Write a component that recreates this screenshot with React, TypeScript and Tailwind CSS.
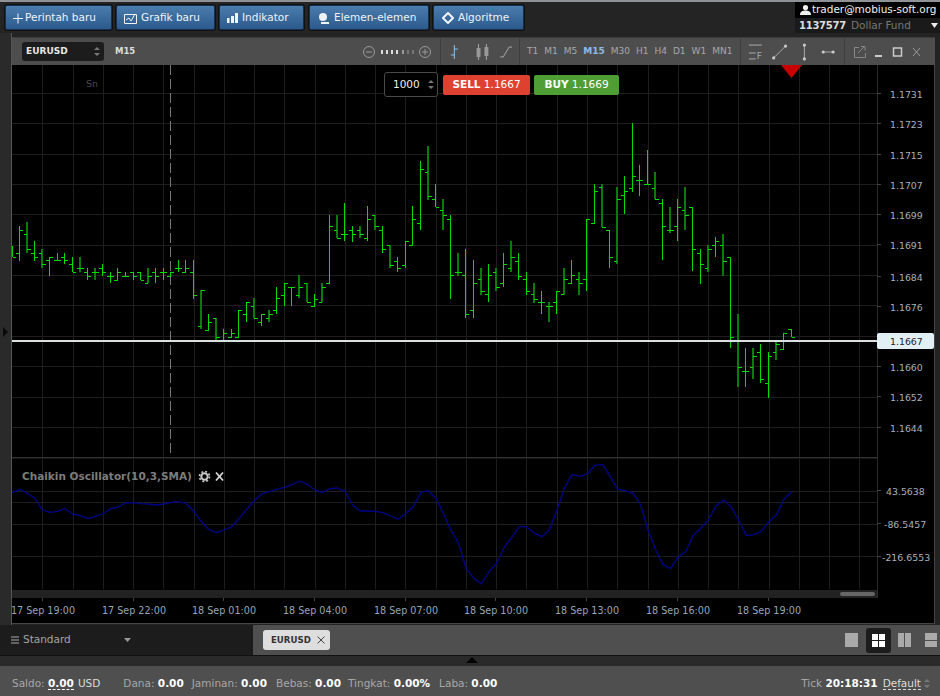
import React from "react";

type B = [number, number, number, number, number?];
// top, bottom, left tick, right tick, dark flag (coordinates read from the chart)
const toY1 = (z: number) => 200 + z / 3;
const toY2 = (z: number) => 110 + z / 3;

const set1: B[] = [
  [137,170,137,170],[78,182,158,91],[67,160,102,148,1],[124,182,158,170],[148,205,158,193,1],[170,228,181,170],
  [158,182,181,181],[158,193,170,181],[170,216,193,216],[170,216,205,205,1],[205,239,216,228],[205,239,216,216,1],
  [193,228,205,216],[216,250,228,228],[205,239,239,216],[216,228,228,228],[216,239,216,228],[216,239,216,239],
  [205,250,250,228,1],[205,250,216,228],[205,239,216,216],[216,228,228,216],[181,216,205,205],[181,216,216,205],
  [181,296,216,284],[270,386,378,270,1],[343,389,389,365],[354,422,354,411,1],[388,422,422,400],[388,411,411,400],
  [331,411,411,331],[306,366,343,306],[295,355,317,355,1],[343,378,366,343],[331,366,354,343,1],[260,342,331,295],
  [250,318,284,250],[260,318,260,262],[226,295,284,262,1],
];
const set2: B[] = [
  [519,577,519,577,1],[553,589,587,566],[519,577,577,531,1],[315,520,520,349],[315,383,361,383,1],[278,392,372,372],
  [349,395,361,372],[349,384,361,372,1],[289,392,383,326],[315,361,315,349,1],[349,430,361,418],[406,475,406,464,1],
  [440,486,452,475],[394,475,464,394],[289,406,406,326],[153,360,338,176],[108,269,187,257,1],[222,291,267,290],
  [267,360,301,315,1],[315,566,326,496],[429,498,485,485,1],[418,623,496,613],[451,623,601,520],[475,555,508,543,1],
  [463,577,553,496],[475,543,485,531,1],[429,532,520,463],[394,486,475,440,1],[429,509,452,498],[486,555,508,543],
  [520,578,553,566,1],[542,612,577,577],[577,637,587,587,1],[542,612,577,542],[475,555,553,508,1],[451,521,520,496],
  [486,555,508,520,1],[326,543,508,326],
];
const set3: B[] = [
  [222,338,338,244],[222,350,232,350,1],[360,475,360,440],[232,462,452,268,1],[198,313,256,244],[40,245,233,199],
  [165,257,210,210],[120,222,222,222],[187,268,233,268,1],[268,450,278,349],[290,370,360,360,1],[267,392,349,290],
  [232,360,301,315,1],[290,484,290,418],[418,521,428,463],[406,485,475,418,1],[382,440,406,394],[372,497,406,452,1],
  [440,713,440,681],[612,830,692,772,1],[715,830,784,784],[715,807,772,738,1],[703,818,727,806],[727,863,818,738],
  [692,750,727,703,1],[670,716,716,670],[658,682,658,682],
];

const bars = [
  ...set1.map((b) => [toY1(b[0]), toY1(b[1]), toY1(b[2]), toY1(b[3]), b[4] ?? 0]),
  ...set2.map((b) => [toY2(b[0]), toY2(b[1]), toY2(b[2]), toY2(b[3]), b[4] ?? 0]),
  ...set3.map((b) => [toY2(b[0]), toY2(b[1]), toY2(b[2]), toY2(b[3]), b[4] ?? 0]),
];

const osc1 = [[36,128],[60,118],[83,131],[105,145],[127,180],[150,187],[173,184],[195,176],[218,192],[240,197],[264,206],[285,199],[307,192],[331,177],[354,171],[376,159],[399,158],[422,161],[445,162],[468,165],[490,162],[513,157],[535,155],[558,160],[580,182],[603,214],[626,238],[649,248],[672,240],[695,230],[717,206],[740,178],[763,152],[785,131],[808,125],[831,118],[853,112],[876,104],[899,93],[921,103],[944,119],[967,128],[990,116],[1012,114],[1035,125],[1058,165],[1081,183],[1104,183],[1126,184],[1149,188],[1172,198],[1195,208],[1218,190],[1240,170],[1263,127],[1285,122],[1308,145],[1330,190],[1352,240],[1376,280],[1398,355],[1410,370]];
const osc2 = [[12,385],[34,402],[57,365],[80,340],[103,292],[125,262],[148,230],[170,230],[193,250],[216,260],[238,240],[261,180],[284,112],[306,74],[329,79],[352,72],[375,46],[398,43],[421,80],[443,118],[466,122],[489,130],[511,162],[534,240],[557,300],[579,344],[602,356],[625,320],[648,304],[670,256],[693,234],[715,210],[738,168],[761,150],[783,170],[806,210],[829,257],[852,254],[874,244],[897,215],[919,195],[942,148],[965,125]];
const oscPts = [
  ...osc1.map(([x, y]) => `${(x / 3).toFixed(1)},${(450 + y / 3).toFixed(1)}`),
  ...osc2.map(([x, y]) => `${(470 + x / 3).toFixed(1)},${(450 + y / 3).toFixed(1)}`),
].join(" ");

const vLines = Array.from({ length: 28 }, (_, k) => Math.round(42.3 + 30.26 * k) + 0.5);
const hLines = Array.from({ length: 12 }, (_, k) => Math.round(93 + 30.35 * k) + 0.5);
const prices: [string, number][] = [
  ["1.1731", 94],["1.1723", 124],["1.1715", 155],["1.1707", 185],["1.1699", 215],["1.1691", 245],
  ["1.1684", 277],["1.1676", 307],["1.1660", 367],["1.1652", 397],["1.1644", 428],
];
const times: [string, number][] = [
  ["17 Sep 19:00", 43],["17 Sep 22:00", 134],["18 Sep 01:00", 224],["18 Sep 04:00", 315],["18 Sep 07:00", 406],
  ["18 Sep 10:00", 496],["18 Sep 13:00", 587],["18 Sep 16:00", 678],["18 Sep 19:00", 769],
];
const frames = ["T1", "M1", "M5", "M15", "M30", "H1", "H4", "D1", "W1", "MN1"];

function Chart() {
  const mono = "'DejaVu Sans', sans-serif";
  return (
    <svg width={923} height={559} viewBox="12 65 923 559" className="block" fontFamily={mono}>
      <rect x={12} y={65} width={923} height={559} fill="#000" />
      <g shapeRendering="crispEdges" stroke="#1e1e1e">
        {vLines.map((x) => (
          <React.Fragment key={x}>
            <line x1={x} x2={x} y1={65} y2={457} />
            <line x1={x} x2={x} y1={459} y2={589} />
          </React.Fragment>
        ))}
        {hLines.map((y) => (
          <line key={y} x1={12} x2={877} y1={y} y2={y} />
        ))}
        {[491, 502, 524, 556].map((y) => (
          <line key={y} x1={12} x2={877} y1={y + 0.5} y2={y + 0.5} />
        ))}
        <line x1={877.5} x2={877.5} y1={65} y2={598} stroke="#2a2a2a" />
        <line x1={12} x2={877} y1={457.5} y2={457.5} stroke="#333" />
        <line x1={12} x2={877} y1={458.5} y2={458.5} stroke="#161616" />
      </g>
      <line x1={170.5} x2={170.5} y1={65} y2={456} stroke="#777" strokeDasharray="10 4" shapeRendering="crispEdges" />
      <text x={86} y={87} fontSize={9.5} fill="#4a4a4a">Sn</text>

      <g shapeRendering="crispEdges">
        {bars.map((b, i) => {
          const raw = 12 + 7.565 * i;
          const dark = b[4] === 1;
          const x = dark ? Math.round(raw) : Math.floor(raw) + 0.5;
          const col = "#00dc00";
          const ly = Math.round(b[2] as number) + 0.5;
          const ry = Math.round(b[3] as number) + 0.5;
          return (
            <g key={i}>
              <line x1={x} x2={x} y1={b[0]} y2={b[1]} stroke={dark ? "#087c08" : col} strokeWidth={dark ? 2 : 1} />
              <line x1={Math.max(12, x - 3.5)} x2={x} y1={ly} y2={ly} stroke={col} />
              <line x1={x} x2={x + 3.5} y1={ry} y2={ry} stroke={col} />
            </g>
          );
        })}
      </g>

      <rect x={12} y={340} width={865} height={2} fill="#d8e0e0" />
      <polygon points="781,65 802,65 791.5,78" fill="#c80000" />

      {prices.map(([p, y]) => (
        <g key={p}>
          <line x1={877} x2={881} y1={Math.round(y - 1) + 0.5} y2={Math.round(y - 1) + 0.5} stroke="#444" shapeRendering="crispEdges" />
          <text x={890} y={y + 3.5} fontSize={9.4} fill="#a9b0b8">{p}</text>
        </g>
      ))}
      <rect x={877} y={333} width={57} height={16} rx={2} fill="#e2eff4" />
      <text x={890} y={344.5} fontSize={9.4} fill="#222">1.1667</text>

      <polyline points={oscPts} fill="none" stroke="#00008a" strokeWidth={1.3} strokeLinejoin="round" />
      <text x={22} y={480} fontSize={10.5} fontWeight={700} fill="#7d7d7d">Chaikin Oscillator(10,3,SMA)</text>
      <g transform="translate(204.5 476.5)" fill="none" stroke="#c8c8c8">
        <circle r={3.2} strokeWidth={2} />
        <circle r={5} strokeWidth={1.6} strokeDasharray="2 1.93" />
      </g>
      <path d="M216 472.5 L223 480.5 M223 472.5 L216 480.5" stroke="#d8d8d8" strokeWidth={1.8} />

      {[["43.5638", 886, 495], ["-86.5457", 884, 528], ["-216.6553", 882, 561]].map(([t, x, y]) => (
        <g key={t as string}>
          <line x1={877} x2={881} y1={(y as number) - 4.5} y2={(y as number) - 4.5} stroke="#444" shapeRendering="crispEdges" />
          <text x={x as number} y={y as number} fontSize={9.4} fill="#a9b0b8">{t}</text>
        </g>
      ))}

      <rect x={12} y={590} width={865} height={8} fill="#222" />
      <rect x={840} y={592} width={35} height={4} rx={2} fill="#666" />
      {times.map(([t, x]) => (
        <g key={t}>
          <line x1={x - 0.5} x2={x - 0.5} y1={598} y2={601} stroke="#444" shapeRendering="crispEdges" />
          <text x={x} y={614} fontSize={9.6} textAnchor="middle" fill="#98a6b4">{t}</text>
        </g>
      ))}
      <line x1={12} x2={935} y1={623.5} y2={623.5} stroke="#444" shapeRendering="crispEdges" />
      <line x1={934.5} x2={934.5} y1={65} y2={624} stroke="#444" shapeRendering="crispEdges" />
    </svg>
  );
}

function TopBtn({ w, icon, label, ml }: { w: string; icon: React.ReactNode; label: string; ml: string }) {
  return (
    <div
      className={`${w} ${ml} h-[25px] flex items-center rounded-[2px] border border-[#16304d] bg-gradient-to-b from-[#4a7cad] to-[#2c5a8d] text-[10.5px] font-medium text-[#eef3f8] [box-shadow:0_0_0_1px_#111]`}
    >
      {icon}
      <span>{label}</span>
    </div>
  );
}

function Spin({ className = "" }: { className?: string }) {
  return (
    <svg width={6} height={11} viewBox="0 0 6 11" className={className}>
      <path d="M0 4 L3 1 L6 4 Z M0 7 L3 10 L6 7 Z" fill="#777" />
    </svg>
  );
}

export default function App() {
  return (
    <div className="relative w-[940px] h-[696px] overflow-hidden flex flex-col bg-[#232323] font-['DejaVu_Sans',sans-serif]">
      {/* top */}
      <div className="h-[33px] shrink-0 flex bg-[#242424] border-t-[2px] border-[#8f9296]">
        <div className="flex items-start pt-[3px] pl-[5px]">
          <TopBtn w="w-[107px]" ml="" label="Perintah baru"
            icon={<svg width={18} height={12} viewBox="0 0 18 12" className="ml-[1px]"><path d="M11 1.5V11.5M6 6.5H16" stroke="#eef3f8" strokeWidth={1} fill="none" /></svg>} />
          <TopBtn w="w-[99px]" ml="ml-[4px]" label="Grafik baru"
            icon={<svg width={13} height={12} viewBox="0 0 13 12" className="ml-[7px] mr-[4px]"><path d="M.5 2.5H12.5V11.5H.5Z M2 8 L5 6 L7 9 L11 2" stroke="#eef3f8" strokeWidth={1} fill="none" /></svg>} />
          <TopBtn w="w-[85px]" ml="ml-[4px]" label="Indikator"
            icon={<svg width={11} height={10} viewBox="0 0 11 10" className="ml-[7px] mr-[4px]"><path d="M0 5H2.5V10H0Z M4 3H7V10H4Z M8 0H11V10H8Z" fill="#eef3f8" /></svg>} />
          <TopBtn w="w-[120px]" ml="ml-[5px]" label="Elemen-elemen"
            icon={<svg width={11} height={12} viewBox="0 0 11 12" className="ml-[8px] mr-[5px]"><circle cx={5} cy={5} r={4} fill="#eef3f8" /><path d="M3 10H11V12H3Z" fill="#eef3f8" /></svg>} />
          <TopBtn w="w-[91px]" ml="ml-[4px]" label="Algoritme"
            icon={<svg width={12} height={12} viewBox="0 0 12 12" className="ml-[8px] mr-[4px]"><path d="M6 1L11 6L6 11L1 6Z" stroke="#eef3f8" strokeWidth={2} fill="none" /></svg>} />
        </div>
        <div className="ml-auto w-[145px] flex flex-col text-[10.5px]">
          <div className="h-[16px] bg-black flex items-center pl-[5px] text-[#f0f0f0] font-medium tracking-[-0.03px] whitespace-nowrap">
            <svg width={11} height={10} viewBox="0 0 11 10" className="mr-[1px] shrink-0"><circle cx={5.5} cy={2.6} r={2.6} fill="#f0f0f0" /><path d="M0 10C0 6.5 2.5 5.5 5.5 5.5S11 6.5 11 10Z" fill="#f0f0f0" /></svg>
            trader@mobius-soft.org
          </div>
          <div className="h-[15px] bg-[#1a1a1a] flex items-center pl-[4px] whitespace-nowrap">
            <span className="font-bold text-[10px] tracking-[-0.25px] text-[#ddd]">1137577</span>
            <span className="ml-[5px] text-[#777]">Dollar Fund</span>
            <svg width={7} height={5} viewBox="0 0 7 5" className="ml-auto mr-[2px]"><path d="M0 0H7L3.5 5Z" fill="#eee" /></svg>
          </div>
        </div>
      </div>

      {/* workspace */}
      <div className="flex-1 min-h-0 flex">
        <div className="w-[12px] shrink-0 flex items-start bg-[#2a2a2a] border-r border-[#555] pt-[294px] pl-[3px]">
          <svg width={5} height={10} viewBox="0 0 5 10"><path d="M0 0L5 5L0 10Z" fill="#0a0a0a" /></svg>
        </div>
        <div className="relative flex-1 min-w-0 flex flex-col pt-[4px]">
          {/* toolbar */}
          <div className="h-[28px] shrink-0 flex bg-[#4d4d4d] border-t border-[#3c3c3c] mr-[5px]">
            <div className="w-[429px] flex items-center pl-[10px] border-r border-[#3e3e3e]">
              <div className="w-[82px] h-[19px] rounded-[3px] bg-[#1c1c1c] flex items-center pl-[4px] pr-[4px] text-[9px] font-bold text-[#e8e8e8]">
                EURUSD<Spin className="ml-auto" />
              </div>
              <span className="ml-[11px] text-[8.5px] font-bold text-[#ddd]">M15</span>
              <svg width={70} height={16} viewBox="0 0 70 16" className="ml-auto mr-[8px]">
                <circle cx={7} cy={8} r={5.5} stroke="#999" fill="none" />
                <path d="M4 8H10" stroke="#999" />
                <path d="M19 6h2v4h-2z M24 6h2v4h-2z M29 6h2v4h-2z M34 6h2v4h-2z" fill="#ddd" />
                <path d="M40 6h2v4h-2z" fill="#999" />
                <path d="M45 6h2v4h-2z M50 6h2v4h-2z" fill="#777" />
                <circle cx={63} cy={8} r={5.5} stroke="#999" fill="none" />
                <path d="M60 8H66M63 5V11" stroke="#999" />
              </svg>
            </div>
            <div className="w-[79px] flex items-center border-r border-[#3e3e3e]">
              <svg width={79} height={20} viewBox="0 0 79 20">
                <path d="M13.5 3V17M13.5 7H17M10 13H13.5" stroke="#8cc4f0" fill="none" />
                <path d="M38 2V18M46 2V18" stroke="#aaa" />
                <rect x={36} y={6} width={4} height={9} fill="#999" />
                <rect x={44} y={5} width={4} height={9} fill="#999" />
                <path d="M60 15H63L69 5H72" stroke="#aaa" fill="none" />
              </svg>
            </div>
            <div className="w-[221px] flex items-center pl-[7px] gap-[6px] border-r border-[#3e3e3e] text-[9px] text-[#a8a8a8]">
              {frames.map((f) => (
                <span key={f} className={f === "M15" ? "font-bold text-[#8db9e8]" : ""}>{f}</span>
              ))}
            </div>
            <div className="w-[104px] flex items-center border-r border-[#3e3e3e]">
              <svg width={104} height={22} viewBox="0 0 104 22">
                <path d="M8 4H21M8 12H15M8 18H15" stroke="#aaa" />
                <text x={16} y={18} fontSize={9} fill="#aaa">F</text>
                <path d="M33 17L45 5" stroke="#aaa" />
                <circle cx={33} cy={17} r={1.6} fill="#ccc" /><circle cx={45} cy={5} r={1.6} fill="#ccc" />
                <path d="M64 5V17" stroke="#aaa" />
                <circle cx={64} cy={4} r={1.6} fill="#ccc" /><circle cx={64} cy={18} r={1.6} fill="#ccc" />
                <path d="M83 11H93" stroke="#aaa" />
                <circle cx={83} cy={11} r={1.6} fill="#ccc" /><circle cx={93} cy={11} r={1.6} fill="#ccc" />
              </svg>
            </div>
            <div className="flex-1 flex items-center">
              <svg width={88} height={22} viewBox="0 0 88 22">
                <path d="M9.5 6.5H14M20.5 12V16.5H9.5V6.5" stroke="#888" fill="none" />
                <path d="M13 12L19.5 5.5M16 5.5H20V9.5" stroke="#888" fill="none" />
                <path d="M30 15H37" stroke="#ccc" strokeWidth={2} />
                <rect x={48.5} y={7} width={8} height={8} fill="none" stroke="#ccc" strokeWidth={1.5} />
                <path d="M68 7L75 15M75 7L68 15" stroke="#999" />
              </svg>
            </div>
          </div>
          <Chart />

          {/* order overlay */}
          <div className="absolute left-[372px] top-[39px] flex items-center">
            <div className="w-[54px] h-[25px] rounded-[3px] border border-[#4a4a4a] bg-black flex items-center pl-[8px] pr-[3px] text-[10.5px] text-[#eee]">
              1000<Spin className="ml-auto" />
            </div>
            <div className="ml-[5px] w-[87px] h-[20px] rounded-[2px] bg-[#df4130] flex items-center justify-center text-[10.5px] text-white">
              <b>SELL</b>&nbsp;<span>1.1667</span>
            </div>
            <div className="ml-[4px] w-[85px] h-[20px] rounded-[2px] bg-[#4f9e35] flex items-center justify-center text-[10.5px] text-white">
              <b>BUY</b>&nbsp;<span>1.1669</span>
            </div>
          </div>
        </div>
      </div>

      {/* tabs */}
      <div className="h-[31px] shrink-0 flex border-b border-[#111]">
        <div className="w-[253px] bg-[#1c1c1c] flex items-center pl-[11px] text-[10.5px] text-[#a5a5a5]">
          <svg width={8} height={8} viewBox="0 0 8 8" className="mr-[4px]"><path d="M0 1H8M0 4H8M0 7H8" stroke="#aaa" /></svg>
          Standard
          <svg width={7} height={4} viewBox="0 0 7 4" className="ml-[53px]"><path d="M0 0H7L3.5 4Z" fill="#999" /></svg>
        </div>
        <div className="flex-1 bg-[#4f4f4f] flex items-center">
          <div className="ml-[10px] w-[67px] h-[20px] rounded-[3px] bg-[#dedede] flex items-center pl-[8px] text-[8.6px] font-bold text-[#333]">
            EURUSD
            <svg width={8} height={8} viewBox="0 0 8 8" className="ml-[6px]"><path d="M.5.5L7.5 7.5M7.5.5L.5 7.5" stroke="#444" /></svg>
          </div>
          <div className="ml-auto flex items-center mr-[3px]">
            <div className="w-[13px] h-[14px] bg-[#aaa] mr-[8px]" />
            <div className="w-[25px] h-[25px] rounded-[3px] bg-[#1c1c1c] flex items-center justify-center mr-[7px]">
              <div className="grid grid-cols-2 gap-[1px] w-[13px] h-[13px]">
                <div className="bg-white" /><div className="bg-white" /><div className="bg-white" /><div className="bg-white" />
              </div>
            </div>
            <div className="w-[13px] h-[14px] flex gap-[1px] mr-[14px]">
              <div className="flex-1 bg-[#aaa]" /><div className="flex-1 bg-[#aaa]" />
            </div>
            <div className="w-[12px] h-[14px] flex flex-col gap-[1px]">
              <div className="flex-1 bg-[#aaa]" /><div className="flex-1 bg-[#aaa]" />
            </div>
          </div>
        </div>
      </div>
      <div className="h-[10px] shrink-0 bg-[#2a2a2a] flex justify-center pt-[1px] pl-[4px]">
        <svg width={12} height={6} viewBox="0 0 12 6"><path d="M0 6L6 0L12 6Z" fill="#050505" /></svg>
      </div>

      {/* status */}
      <div className="h-[30px] shrink-0 bg-[#4f4f4f] flex items-center pt-[5px] pl-[12px] pr-[9px] text-[10.5px] text-[#a8a8a8] whitespace-nowrap">
        <span>Saldo:&nbsp;</span>
        <b className="text-white border-b border-dashed border-white leading-[12px]">0.00</b>
        <span className="ml-[4px] font-medium text-[#ddd]">USD</span>
        <span className="ml-[23px]">Dana:&nbsp;</span><b className="text-white">0.00</b>
        <span className="ml-[8px]">Jaminan:&nbsp;</span><b className="text-white">0.00</b>
        <span className="ml-[9px]">Bebas:&nbsp;</span><b className="text-white">0.00</b>
        <span className="ml-[7px]">Tingkat:&nbsp;</span><b className="text-white">0.00%</b>
        <span className="ml-[9px]">Laba:&nbsp;</span><b className="text-white">0.00</b>
        <span className="ml-auto">Tick&nbsp;</span><b className="text-white">20:18:31</b>
        <span className="ml-[5px] text-[#ddd] border-b border-dashed border-[#ddd] leading-[12px]">Default</span>
        <Spin className="ml-[3px] mr-[1px]" />
      </div>
    </div>
  );
}
